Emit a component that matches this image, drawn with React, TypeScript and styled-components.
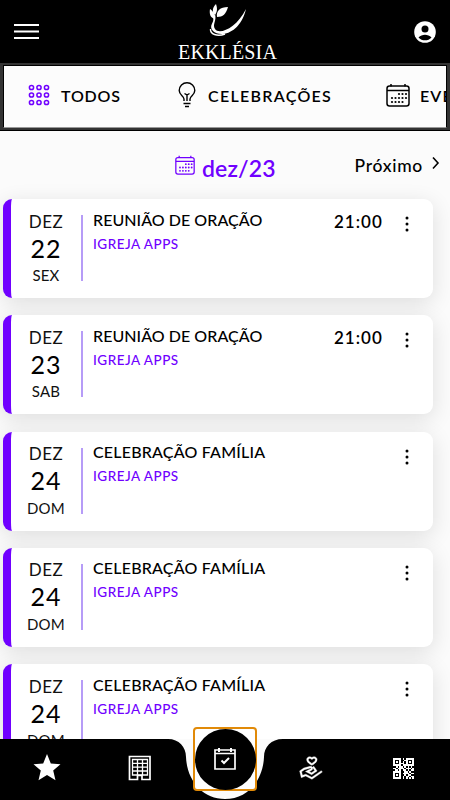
import React from 'react';
import styled, { createGlobalStyle } from 'styled-components';
import { LiaHandHoldingHeartSolid } from 'react-icons/lia';

const Global = createGlobalStyle`
  * { box-sizing: border-box; }
  body { margin: 0; background: #fbfbfb; overflow: hidden; }
`;
const purple = '#7000ff';

const Page = styled.div`
  width: 450px; height: 800px; position: relative; overflow: hidden;
  background: #fbfbfb; color: #000;
  font-family: Lato, 'Open Sans', sans-serif;
  white-space: nowrap;
`;
const Header = styled.header`
  height: 63px; background: #000; color: #fff;
  display: grid; grid-template-columns: 40px 1fr 40px; padding: 0 14px 0 13px;
`;
const HeaderButton = styled.button<{ $end?: boolean }>`
  border: 0; padding: 0; background: none; height: 63px; color: inherit;
  display: flex; align-items: center; justify-content: ${p => (p.$end ? 'flex-end' : 'flex-start')};
`;
const Brand = styled.div`
  display: flex; flex-direction: column; align-items: center; padding: 3px 0 0 6px;
`;
const BrandName = styled.div`
  font: 20px/20px 'Liberation Serif', serif; letter-spacing: 0.15px; margin-top: 3px;
`;
const Tabs = styled.nav`
  height: 68px; padding: 2px 4px 0; background: #333;
  border-bottom: 1px solid #000;
`;
const TabStrip = styled.div`
  height: 63px; margin: 0 -1px; border: 1px solid #000; border-bottom-color: #999; background: #fcfcfc; overflow: hidden;
  display: flex; align-items: center; padding: 0 0 3px 24px;
`;
const Tab = styled.div<{ $width: number; $space: number; $gap: number }>`
  flex: none; width: ${p => p.$width}px; display: flex; align-items: center;
  font-size: 16px; font-weight: 600; letter-spacing: ${p => p.$space}px;
  svg { flex: none; margin-right: ${p => p.$gap}px; }
`;
const Month = styled.section`
  height: 68px; display: grid; grid-template-columns: 175px 1fr auto; padding-right: 8px;
`;
const Current = styled.div`
  grid-column: 2; display: flex; align-items: center; color: ${purple};
  font-size: 23px; font-weight: 600; padding-top: 6px; letter-spacing: .15px;
  svg { margin: -6px 7px 0 0; }
`;
const Next = styled.div`
  display: flex; align-items: center; font-size: 17.5px; font-weight: 500; padding-top: 1px; letter-spacing: .7px;
  svg { margin: -5px 0 0 7px; }
`;
const List = styled.main`
  display: flex; flex-direction: column; gap: 17.3px; padding: 0 17px 0 3px;
`;
const Card = styled.article`
  height: 99px; flex: none; background: #fff; border-left: 8px solid ${purple}; border-radius: 9px;
  box-shadow: 0 5px 22px rgba(0,0,0,.12);
  display: grid; grid-template-columns: 72px 1fr 59px 40px;
`;
const DateBox = styled.div`
  display: flex; flex-direction: column; align-items: center; height: 66px; margin-top: 16px;
  border-right: 2px solid #b69cf7;
`;
const MonthName = styled.div`font-size: 17px; line-height: 17px; margin-top: -2.5px; letter-spacing: .5px; color: #111;`;
const Day = styled.div`font-size: 25px; line-height: 25px; margin-top: 6px; letter-spacing: 1px;`;
const Weekday = styled.div`font-size: 15px; line-height: 16px; margin-top: 6.5px; letter-spacing: .2px; color: #111;`;
const Info = styled.div`padding: 12px 0 0 10px;`;
const Title = styled.div<{ $space: number }>`
  font-size: 16px; line-height: 18px; font-weight: 500; letter-spacing: ${p => p.$space}px; margin-top: -0.5px;
`;
const Place = styled.div`
  font-size: 13.5px; line-height: 16px; margin-top: 7px; font-weight: 500; color: ${purple}; letter-spacing: .5px;
`;
const Time = styled.div`
  font-size: 17px; line-height: 20px; font-weight: 600; padding: 12.5px 0 0; letter-spacing: 1px;
`;
const More = styled.div`
  display: flex; justify-content: center; align-items: flex-start; padding: 17px 12px 0 0;
`;
const BottomBar = styled.nav`
  position: absolute; left: 0; bottom: 0; width: 450px; height: 61px;
  display: grid; grid-template-columns: 93px 93px 78px 93px 93px; align-items: center; color: #fff;
`;
const BarShape = styled.svg`position: absolute; inset: 0;`;
const BarItem = styled.a`
  position: relative; display: flex; justify-content: center; align-items: center; height: 58px; margin-top: -3px;
`;
const Agenda = styled.a`
  position: relative; width: 64px; height: 64px; margin: -21px 0 0 7px;
  border: 2px solid #e18a08; border-radius: 4px; background: #fff;
  display: flex; align-items: center; justify-content: center;
`;
const AgendaDisc = styled.span`
  width: 61px; height: 61px; flex: none; border-radius: 50%; background: #000;
  display: flex; align-items: center; justify-content: center;
`;

const CALENDAR_DAYS = [[13, 11], [16.5, 11], [20, 11], [6, 15], [9.5, 15], [13, 15], [16.5, 15], [20, 15], [6, 19], [9.5, 19], [13, 19], [16.5, 19]];
const Calendar = ({ size }: { size: number }) => (
  <svg width={size} height={size} viewBox="0 0 24 24" fill="none" stroke="currentColor" strokeWidth="1.5">
    <rect x="1" y="3" width="22" height="20" rx="2.5" /><path d="M1 7.5H23M5 1V3.5M19 1V3.5" />
    {CALENDAR_DAYS.map(([x, y]) => <circle key={`${x}-${y}`} cx={x} cy={y} r="1.1" fill="currentColor" stroke="none" />)}
  </svg>
);
const Dots = () => (
  <svg width="22" height="22" fill="none" stroke={purple} strokeWidth="1.5">
    {[3.5, 11, 18.5].map(y => [3.5, 11, 18.5].map(x => <circle key={`${x}-${y}`} cx={x} cy={y} r="2.1" />))}
  </svg>
);
const Bulb = () => (
  <svg width="18" height="26" viewBox="0 0 18 26" fill="none" stroke="#000" strokeWidth="1.4">
    <path d="M6 19V17C6 14 1.2 13 1.2 8.5a7.8 7.8 0 0 1 15.6 0C16.8 13 12 14 12 17v2M9 19V13L6.5 11.5M9 13l2.5-1.5M5.5 21.5h7M7 24.5h4" />
  </svg>
);
const Kebab = () => (
  <svg width="4" height="16"><circle cx="2" cy="2" r="1.5" /><circle cx="2" cy="8" r="1.5" /><circle cx="2" cy="14" r="1.5" /></svg>
);
const Logo = () => (
  <svg width="40" height="36" viewBox="0 0 40 36" fill="#fff">
    <path d="M8 1C4 5 4 9 7 12 10 8 9 4 8 1M2 6C1 12 3 15 7 16 7 11 5 8 2 6M20 4C12 4 8 8 9 14 15 14 18 11 20 4" />
    <path d="M7 11C9 18 4 21 7 26 11 32 28 26 38 6 32 31 12 35 5 28 0 22 7 20 5 14Z" />
    <path d="M2.500 26C2 31 9 34 17 31" fill="none" stroke="#fff" strokeWidth="1.4" />
  </svg>
);
const QR_ROWS = [
  '1111101011111', '1000100110001', '1010101010101', '1000111010001', '1111101111111', '0010110101010',
  '1101111011101', '0110101101011', '1111100110100', '1000101111011', '1010100101100', '1000101011011', '1111101010101',
];
const Qr = () => (
  <svg width="21" height="21" viewBox="0 0 13 13" fill="#fff" shapeRendering="crispEdges">
    {QR_ROWS.map((r, y) => r.split('').map((c, x) => c === '1' && <rect key={`${x}-${y}`} x={x} y={y} width="1" height="1" />))}
  </svg>
);

const events = [
  { day: '22', week: 'SEX', title: 'REUNIÃO DE ORAÇÃO', time: '21:00', space: 0.05 },
  { day: '23', week: 'SAB', title: 'REUNIÃO DE ORAÇÃO', time: '21:00', space: 0.05 },
  { day: '24', week: 'DOM', title: 'CELEBRAÇÃO FAMÍLIA', time: '', space: 0.2 },
  { day: '24', week: 'DOM', title: 'CELEBRAÇÃO FAMÍLIA', time: '', space: 0.2 },
  { day: '24', week: 'DOM', title: 'CELEBRAÇÃO FAMÍLIA', time: '', space: 0.2 },
];

export default function App() {
  return (
    <Page>
      <Global />
      <Header>
        <HeaderButton aria-label="Menu">
          <svg width="27" height="18" stroke="#fff" strokeWidth="2"><path d="M1 2H26M1 8.5H26M1 15H26" /></svg>
        </HeaderButton>
        <Brand><Logo /><BrandName>EKKLÉSIA</BrandName></Brand>
        <HeaderButton aria-label="Perfil" $end>
          <svg width="22" height="22"><circle cx="11" cy="11" r="10.8" fill="#fff" /><circle cx="11" cy="8" r="3.5" /><path d="M4.5 16.5C8 12.7 14 12.7 17.5 16.5 14 20.3 8 20.3 4.5 16.5" /></svg>
        </HeaderButton>
      </Header>
      <Tabs>
        <TabStrip>
          <Tab $width={150} $space={0.8} $gap={11}><Dots />TODOS</Tab>
          <Tab $width={208} $space={1.3} $gap={12}><Bulb />CELEBRAÇÕES</Tab>
          <Tab $width={120} $space={1.1} $gap={10}><Calendar size={24} />EVENTOS</Tab>
        </TabStrip>
      </Tabs>
      <Month>
        <Current><Calendar size={20} />dez/23</Current>
        <Next>Próximo<svg width="12" height="14" fill="none" stroke="#000" strokeWidth="1.6"><path d="M3 1.5l5 5.5-5 5.5" /></svg></Next>
      </Month>
      <List>
        {events.map((e, i) => (
          <Card key={i}>
            <DateBox><MonthName>DEZ</MonthName><Day>{e.day}</Day><Weekday>{e.week}</Weekday></DateBox>
            <Info><Title $space={e.space}>{e.title}</Title><Place>IGREJA APPS</Place></Info>
            <Time>{e.time}</Time>
            <More><Kebab /></More>
          </Card>
        ))}
      </List>
      <BottomBar>
        <BarShape width="450" height="61">
          <rect width="130" height="61" x="160" fill="#fbfbfb" />
          <path d="M0 0H168C179 0 186 8 186 18C187 42 203 60 225 60C247 60 263 42 264 18C264 8 271 0 283 0H450V61H0Z" />
        </BarShape>
        <BarItem aria-label="Destaques"><svg width="28" height="28" viewBox="0 0 28 28" fill="#fff"><path d="M14 0l3.8 9.4 9.7.8-7.3 6.3 2.3 9.8-8.5-5.2-8.5 5.2 2.3-9.8L.5 10.2l9.7-.8z" /></svg></BarItem>
        <BarItem aria-label="Igreja"><svg width="24" height="26" fill="none" stroke="#fff"><path strokeWidth="1.7" d="M1.5 1.5H22V24.5H14V20.5H9.5V24.5H1.5Z" /><path d="M4.5 4.5H19.5V20H4.5ZM4.5 8.3H19.5M4.5 12.1H19.5M4.5 16H19.5M9.5 4.5V20M14.5 4.5V20" strokeWidth="1.3" /></svg></BarItem>
        <Agenda aria-label="Agenda"><AgendaDisc>
          <svg width="24" height="24" fill="none" stroke="#fff" strokeWidth="1.7"><path d="M2 3H22V22H2ZM2 6.5H22" /><path d="M6 1V5M18 1V5M8.5 13.5l2.5 2.5 5-5" strokeWidth="2" /></svg>
        </AgendaDisc></Agenda>
        <BarItem aria-label="Doações"><LiaHandHoldingHeartSolid size={28} stroke="#fff" strokeWidth={0.4} /></BarItem>
        <BarItem aria-label="QR code"><Qr /></BarItem>
      </BottomBar>
    </Page>
  );
}
